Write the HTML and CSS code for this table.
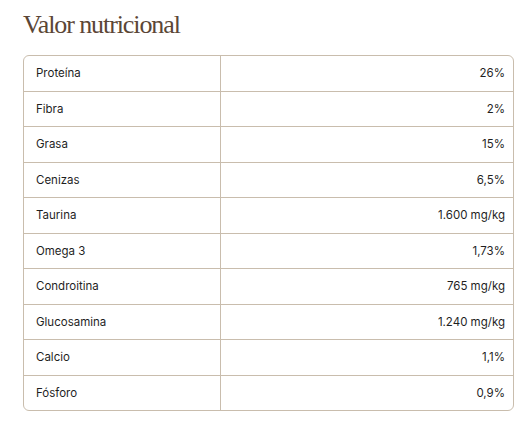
FILE: index.html
```html
<!DOCTYPE html>
<html lang="es">
<head>
<meta charset="utf-8">
<link rel="stylesheet" href="styles.css">
</head>
<body>
<section class="nutri">
  <h2 class="title">Valor nutricional</h2>
  <div class="table">
    <div class="row"><div class="name">Proteína</div><div class="val">26%</div></div>
    <div class="row"><div class="name">Fibra</div><div class="val">2%</div></div>
    <div class="row"><div class="name">Grasa</div><div class="val">15%</div></div>
    <div class="row"><div class="name">Cenizas</div><div class="val">6,5%</div></div>
    <div class="row"><div class="name">Taurina</div><div class="val">1.600 mg/kg</div></div>
    <div class="row"><div class="name">Omega 3</div><div class="val">1,73%</div></div>
    <div class="row"><div class="name">Condroitina</div><div class="val">765 mg/kg</div></div>
    <div class="row"><div class="name">Glucosamina</div><div class="val">1.240 mg/kg</div></div>
    <div class="row"><div class="name">Calcio</div><div class="val">1,1%</div></div>
    <div class="row"><div class="name">Fósforo</div><div class="val">0,9%</div></div>
  </div>
</section>
</body>
</html>
```
FILE: styles.css
```css
html, body {
  margin: 0;
  background: #ffffff;
}
.nutri {
  padding: 11px 9px 0 23px;
}
.title {
  margin: 0 0 16px 0;
  font-family: "Liberation Serif", "DejaVu Serif", serif;
  font-weight: 400;
  font-size: 26px;
  line-height: 28px;
  letter-spacing: -1.1px;
  color: #5b4636;
}
.table {
  border: 1px solid #c9bdad;
  border-radius: 6px;
  display: flex;
  flex-direction: column;
  font-family: "Inter", "Lato", sans-serif;
  font-size: 11.5px;
  color: #1f1f1f;
}
.row {
  display: grid;
  grid-template-columns: 197px 1fr;
  height: 34.5px;
}
.row + .row {
  border-top: 1px solid #c9bdad;
}
.name {
  display: flex;
  align-items: center;
  padding-left: 12px;
  border-right: 1px solid #c9bdad;
}
.val {
  display: flex;
  align-items: center;
  justify-content: flex-end;
  padding-right: 8px;
}
```
